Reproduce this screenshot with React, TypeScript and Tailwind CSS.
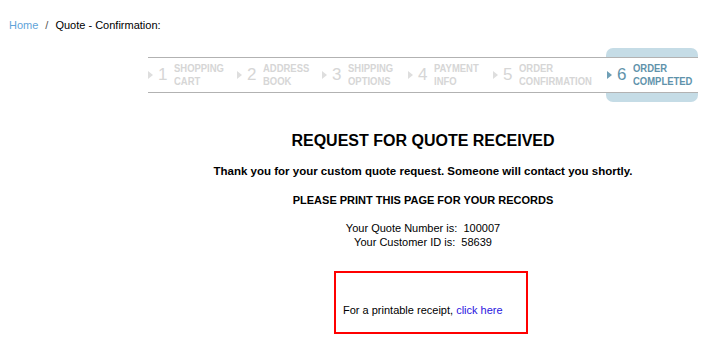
import type { ReactNode } from 'react';

type Step = {
  n: number;
  top: string;
  bottom: string;
  width: string;
};

const steps: Step[] = [
  { n: 1, top: 'SHOPPING', bottom: 'CART', width: 'w-[89px]' },
  { n: 2, top: 'ADDRESS', bottom: 'BOOK', width: 'w-[85px]' },
  { n: 3, top: 'SHIPPING', bottom: 'OPTIONS', width: 'w-[86px]' },
  { n: 4, top: 'PAYMENT', bottom: 'INFO', width: 'w-[85px]' },
  { n: 5, top: 'ORDER', bottom: 'CONFIRMATION', width: 'w-[113px]' },
];

function Arrow({ color }: { color: string }) {
  return (
    <svg width="5" height="8" viewBox="0 0 5 8" aria-hidden="true">
      <polygon points="0,0 5,4 0,8" fill={color} />
    </svg>
  );
}

function StepCell({ n, top, bottom, active }: { n: number; top: string; bottom: string; active?: boolean }) {
  const text = active ? 'text-[#5f93ab]' : 'text-[#d6d6d6]';
  return (
    <div className={`flex items-center ${text}`}>
      <span className="w-[10px] shrink-0 flex items-center">
        <Arrow color={active ? '#6f9fb6' : '#dedede'} />
      </span>
      <span className="w-[16px] shrink-0 text-[17px] leading-[18px]">{n}</span>
      {/* condensed label: no narrow face installed, so squeeze Arial bold */}
      <span className="inline-flex shrink-0 origin-left scale-x-[0.86] flex-col text-[11px] leading-[13px] font-bold whitespace-nowrap">
        <span>{top}</span>
        <span>{bottom}</span>
      </span>
    </div>
  );
}

function Line({ children }: { children: ReactNode }) {
  return <div className="text-center">{children}</div>;
}

export default function App() {
  return (
    <div className="min-h-[347px] bg-white text-black font-['Liberation_Sans',Arial,sans-serif]">
      {/* breadcrumb */}
      <div className="pt-[19px] pl-[9px] text-[11px] leading-[13px]">
        <span className="text-[#5fa3d9]">Home</span>
        <span className="mx-[7px] text-[#555]">/</span>
        <span>Quote - Confirmation:</span>
      </div>

      <div className="ml-[148px] w-[550px]">
        {/* progress */}
        <div className="mt-[16px] flex items-center">
          <div className="flex h-[36px] w-[458px] shrink-0 items-center border-y border-[#b2b2b2]">
            {steps.map((s) => (
              <div key={s.n} className={`${s.width} shrink-0`}>
                <StepCell n={s.n} top={s.top} bottom={s.bottom} />
              </div>
            ))}
          </div>
          <div className="flex w-[92px] shrink-0 flex-col">
            <div className="h-[9px] rounded-t-[7px] bg-[#c5dce6]" />
            <div className="flex h-[36px] items-center border-y border-[#b2b2b2] bg-white pl-[1px]">
              <StepCell n={6} top="ORDER" bottom="COMPLETED" active />
            </div>
            <div className="h-[9px] rounded-b-[7px] bg-[#c5dce6]" />
          </div>
        </div>

        {/* message */}
        <div className="mt-[30px]">
          <Line>
            <h1 className="text-[16px] leading-[18px] font-bold">REQUEST FOR QUOTE RECEIVED</h1>
          </Line>
          <p className="mt-[15px] text-center text-[11.5px] leading-[13px] font-bold">
            Thank you for your custom quote request. Someone will contact you shortly.
          </p>
          <p className="mt-[16px] text-center text-[11px] leading-[13px] font-bold">
            PLEASE PRINT THIS PAGE FOR YOUR RECORDS
          </p>
          <div className="mt-[14px] text-center text-[11px] leading-[14px]">
            <div>Your Quote Number is:&nbsp; 100007</div>
            <div>Your Customer ID is:&nbsp; 58639</div>
          </div>
        </div>

        {/* receipt box */}
        <div className="mt-[22px] ml-[186px] w-[194px] h-[63px] border-2 border-[#ff0000] pt-[31px] pl-[7px] text-[11px] leading-[13px]">
          For a printable receipt,{' '}
          <a href="#" className="text-[#2a14e0]">click here</a>
        </div>
      </div>
    </div>
  );
}
